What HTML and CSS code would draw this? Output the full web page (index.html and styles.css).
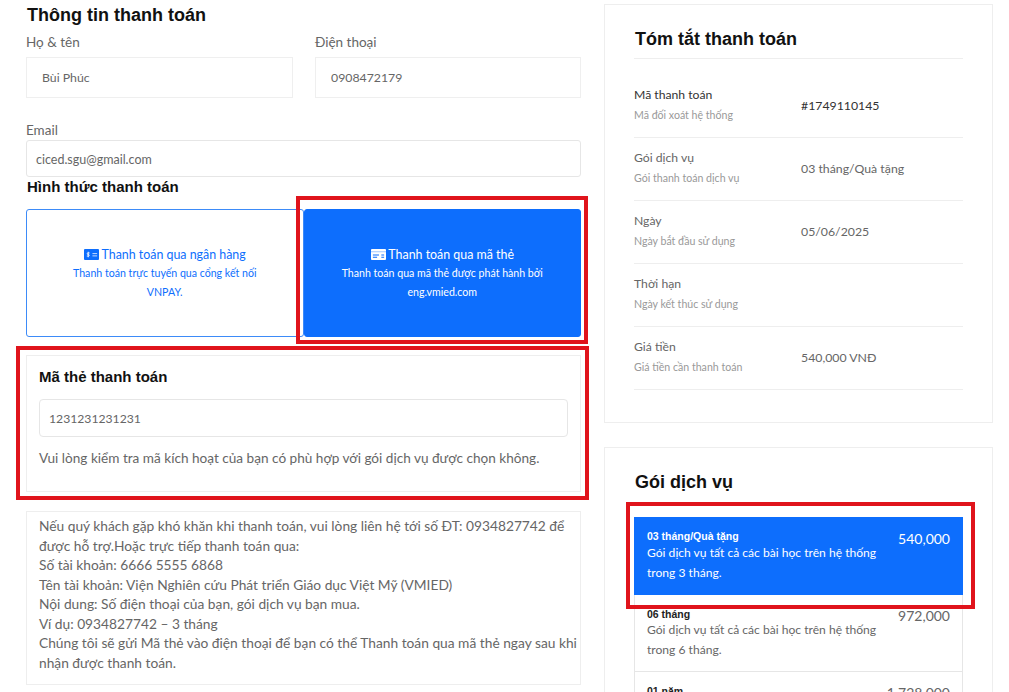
FILE: index.html
```html
<!DOCTYPE html>
<html lang="vi">
<head>
    <meta charset="UTF-8">
    <meta name="viewport" content="width=device-width, initial-scale=1.0">
    <title>Thông tin thanh toán</title>
    <link rel="stylesheet" href="styles.css">
</head>
<body>
    <div class="page">
        <div class="col-left">
            <h2 class="title-main">Thông tin thanh toán</h2>
            <div class="field-row">
                <div class="field">
                    <label>Họ &amp; tên</label>
                    <div class="input input-tall">Bùi Phúc</div>
                </div>
                <div class="field">
                    <label>Điện thoại</label>
                    <div class="input input-tall">0908472179</div>
                </div>
            </div>
            <div class="field field-email">
                <label>Email</label>
                <div class="input input-email">ciced.sgu@gmail.com</div>
            </div>

            <h3 class="title-method">Hình thức thanh toán</h3>
            <div class="methods">
                <div class="method">
                    <div class="method-name">
                        <svg class="method-icon" viewBox="0 0 16 12" width="15" height="11" preserveAspectRatio="none">
                            <rect width="16" height="12" rx="1" fill="#0d6efd"/>
                            <path d="M4.5 3v6M6 4.3H4A.9.9 0 0 0 4 6h1a.9.9 0 0 1 0 1.700H3" fill="none" stroke="#fff" stroke-width=".9"/>
                            <path d="M9 5h5M9 7.500h5" stroke="#cfe2ff" stroke-width="1"/>
                        </svg>
                        Thanh toán qua ngân hàng
                    </div>
                    <p>Thanh toán trực tuyến qua cổng kết nối VNPAY.</p>
                </div>
                <div class="method active">
                    <div class="method-name">
                        <svg class="method-icon" viewBox="0 0 16 12" width="15" height="11" preserveAspectRatio="none">
                            <rect width="16" height="12" rx="1" fill="#fff"/>
                            <path d="M0 3h16" stroke="#0d6efd" stroke-width=".8" opacity=".5"/>
                            <path d="M2 6.500h6.500M2 9h4.500M11 6.500h3M11 9h3" stroke="#0d6efd" stroke-width="1.100"/>
                        </svg>
                        Thanh toán qua mã thẻ
                    </div>
                    <p>Thanh toán qua mã thẻ được phát hành bởi eng.vmied.com</p>
                </div>
            </div>

            <div class="code-box">
                <h4>Mã thẻ thanh toán</h4>
                <div class="input input-code">1231231231231</div>
                <p>Vui lòng kiểm tra mã kích hoạt của bạn có phù hợp với gói dịch vụ được chọn không.</p>
            </div>

            <div class="help-box">
                Nếu quý khách gặp khó khăn khi thanh toán, vui lòng liên hệ tới số ĐT: 0934827742 để được hỗ trợ.Hoặc trực tiếp thanh toán qua:<br>
                Số tài khoản: 6666 5555 6868<br>
                Tên tài khoản: Viện Nghiên cứu Phát triển Giáo dục Việt Mỹ (VMIED)<br>
                Nội dung: Số điện thoại của bạn, gói dịch vụ bạn mua.<br>
                Ví dụ: 0934827742 – 3 tháng<br>
                Chúng tôi sẽ gửi Mã thẻ vào điện thoại để bạn có thể Thanh toán qua mã thẻ ngay sau khi nhận được thanh toán.
            </div>
        </div>

        <div class="col-right">
            <div class="panel panel-summary">
                <h3 class="panel-title panel-title-line">Tóm tắt thanh toán</h3>
                <div class="summary-row">
                    <div class="summary-text"><div class="summary-label strong">Mã thanh toán</div><div class="summary-sub">Mã đối xoát hệ thống</div></div>
                    <div class="summary-value strong">#1749110145</div>
                </div>
                <div class="summary-row">
                    <div class="summary-text"><div class="summary-label">Gói dịch vụ</div><div class="summary-sub">Gói thanh toán dịch vụ</div></div>
                    <div class="summary-value">03 tháng/Quà tặng</div>
                </div>
                <div class="summary-row">
                    <div class="summary-text"><div class="summary-label">Ngày</div><div class="summary-sub">Ngày bắt đầu sử dụng</div></div>
                    <div class="summary-value">05/06/2025</div>
                </div>
                <div class="summary-row">
                    <div class="summary-text"><div class="summary-label">Thời hạn</div><div class="summary-sub">Ngày kết thúc sử dụng</div></div>
                    <div class="summary-value"></div>
                </div>
                <div class="summary-row">
                    <div class="summary-text"><div class="summary-label">Giá tiền</div><div class="summary-sub">Giá tiền cần thanh toán</div></div>
                    <div class="summary-value">540,000 VNĐ</div>
                </div>
            </div>

            <div class="panel panel-plans">
                <h3 class="panel-title">Gói dịch vụ</h3>
                <div class="plan-list">
                    <div class="plan active">
                        <div class="plan-info"><div class="plan-name">03 tháng/Quà tặng</div><div class="plan-desc">Gói dịch vụ tất cả các bài học trên hệ thống trong 3 tháng.</div></div>
                        <div class="plan-price">540,000</div>
                    </div>
                    <div class="plan">
                        <div class="plan-info"><div class="plan-name">06 tháng</div><div class="plan-desc">Gói dịch vụ tất cả các bài học trên hệ thống trong 6 tháng.</div></div>
                        <div class="plan-price">972,000</div>
                    </div>
                    <div class="plan">
                        <div class="plan-info"><div class="plan-name">01 năm</div></div>
                        <div class="plan-price">1,728,000</div>
                    </div>
                </div>
            </div>
        </div>

        <!-- khung đỏ đánh dấu trên ảnh -->
        <div class="mark mark-method"></div>
        <div class="mark mark-code"></div>
        <div class="mark mark-plan"></div>
    </div>
</body>
</html>
```

FILE: styles.css
```css
* {
    box-sizing: border-box;
}

html, body {
    margin: 0;
    height: 692px;
    overflow: hidden;
}

body {
    font-family: "Lato", "Noto Sans", sans-serif;
    font-size: 14px;
    color: #666;
    background: #fff;
}

.page {
    position: relative;
    display: flex;
    gap: 23px;
    height: 692px;
    overflow: hidden;
    padding: 4px 16px 0 26px;
}

.col-left {
    width: 555px;
    flex-shrink: 0;
}

.col-right {
    width: 389px;
    flex-shrink: 0;
}

h2, h3, h4, p {
    margin: 0;
}

.title-main,
.title-method,
.panel-title,
.code-box h4 {
    font-family: "Liberation Sans", sans-serif;
    font-weight: bold;
    color: #111;
}

.title-main {
    font-size: 18px;
    line-height: 22px;
    padding-left: 1px;
}

.field-row {
    display: grid;
    grid-template-columns: 267px 266px;
    gap: 22px;
    margin-top: 6px;
}

.field label {
    display: block;
    font-size: 13.500px;
    line-height: 20px;
}

.input {
    font-size: 12.300px;
    color: #666;
    background: #fff;
    border: 1px solid #e6e6e6;
    display: flex;
    align-items: center;
}

.input-tall {
    height: 41px;
    margin-top: 5px;
    padding-left: 15px;
    border-color: #efefef;
}

.field-email {
    margin-top: 22px;
}

.input-email {
    height: 37px;
    padding: 1px 0 0 9px;
    border-radius: 3px;
    font-size: 12.500px;
}

.title-method {
    font-size: 15px;
    line-height: 18px;
    padding-top: 1px;
    padding-left: 1px;
}

.methods {
    display: grid;
    grid-template-columns: 1fr 1fr;
    margin-top: 13px;
    height: 128px;
}

.method {
    display: flex;
    flex-direction: column;
    align-items: center;
    justify-content: center;
    padding: 0 32px;
    text-align: center;
    color: #0d6efd;
    border: 1px solid #3d8bf8;
    border-radius: 3px;
    background: #fff;
}

.method.active {
    background: #0d6efd;
    border-color: #0d6efd;
    color: #fff;
}

.method-name {
    font-size: 12.400px;
    line-height: 20px;
}

.method-icon {
    vertical-align: -1px;
}

.method p {
    font-size: 10.600px;
    line-height: 19px;
    margin-top: -1px;
}

.code-box {
    margin-top: 18px;
    height: 137px;
    border: 1px solid #eee;
    padding: 12px 12px 0;
}

.code-box h4 {
    font-size: 15px;
    line-height: 18px;
}

.input-code {
    height: 38px;
    margin-top: 13px;
    padding-left: 9px;
    border-radius: 4px;
    font-size: 12.200px;
}

.code-box p {
    margin-top: 11px;
    font-size: 13.600px;
    line-height: 20px;
}

.help-box {
    margin-top: 19px;
    height: 174px;
    border: 1px solid #eee;
    padding: 4px 0 0 12px;
    font-size: 13.750px;
    line-height: 19.500px;
}

.panel {
    border: 1px solid #eee;
    padding: 0 29px 0 29px;
}

.panel-summary {
    height: 419px;
}

.panel-plans {
    margin-top: 24px;
    height: 300px;
}

.panel-title {
    font-size: 18px;
    line-height: 22px;
    padding-left: 1px;
}

.panel-summary .panel-title {
    padding-top: 23px;
    height: 54px;
    border-bottom: 1px solid #eee;
}

.summary-row {
    display: grid;
    grid-template-columns: 167px 1fr;
    align-items: center;
    height: 63px;
    padding-bottom: 2px;
    border-bottom: 1px solid #eee;
}

.panel-title-line + .summary-row {
    margin-top: 16px;
}

.summary-text {
    margin-bottom: 2px;
}

.summary-label {
    font-size: 12.200px;
    line-height: 18px;
}

.summary-sub {
    font-size: 10.600px;
    line-height: 16px;
    margin-top: 3px;
    color: #999;
}

.summary-value {
    font-size: 12.300px;
}

.strong {
    color: #333;
}

.panel-plans .panel-title {
    padding-top: 23px;
}

.plan-list {
    margin-top: 24px;
}

.plan {
    display: flex;
    justify-content: space-between;
    height: 77px;
    padding: 12px 12px 0;
    border: 1px solid #e6e6e6;
    border-top: 0;
}

.plan.active {
    background: #0d6efd;
    color: #fff;
    border-color: #0d6efd;
    height: 78px;
}

.plan-info {
    width: 240px;
}

.plan-name {
    font-family: "Liberation Sans", sans-serif;
    font-size: 10.500px;
    font-weight: bold;
    line-height: 14px;
    color: #222;
}

.plan.active .plan-name {
    color: #fff;
}

.plan-desc {
    font-size: 12.100px;
    line-height: 19.500px;
}

.plan-price {
    font-size: 14px;
    line-height: 20px;
}

.plan:not(.active) .plan-desc,
.plan:not(.active) .plan-price {
    margin-top: -1px;
}

.mark {
    position: absolute;
    border: 4px solid #e0141c;
}

.mark-method {
    left: 296px;
    top: 196px;
    width: 292px;
    height: 148px;
}

.mark-code {
    left: 16px;
    top: 346px;
    width: 573px;
    height: 154px;
}

.mark-plan {
    left: 626px;
    top: 502px;
    width: 349px;
    height: 107px;
}
```
